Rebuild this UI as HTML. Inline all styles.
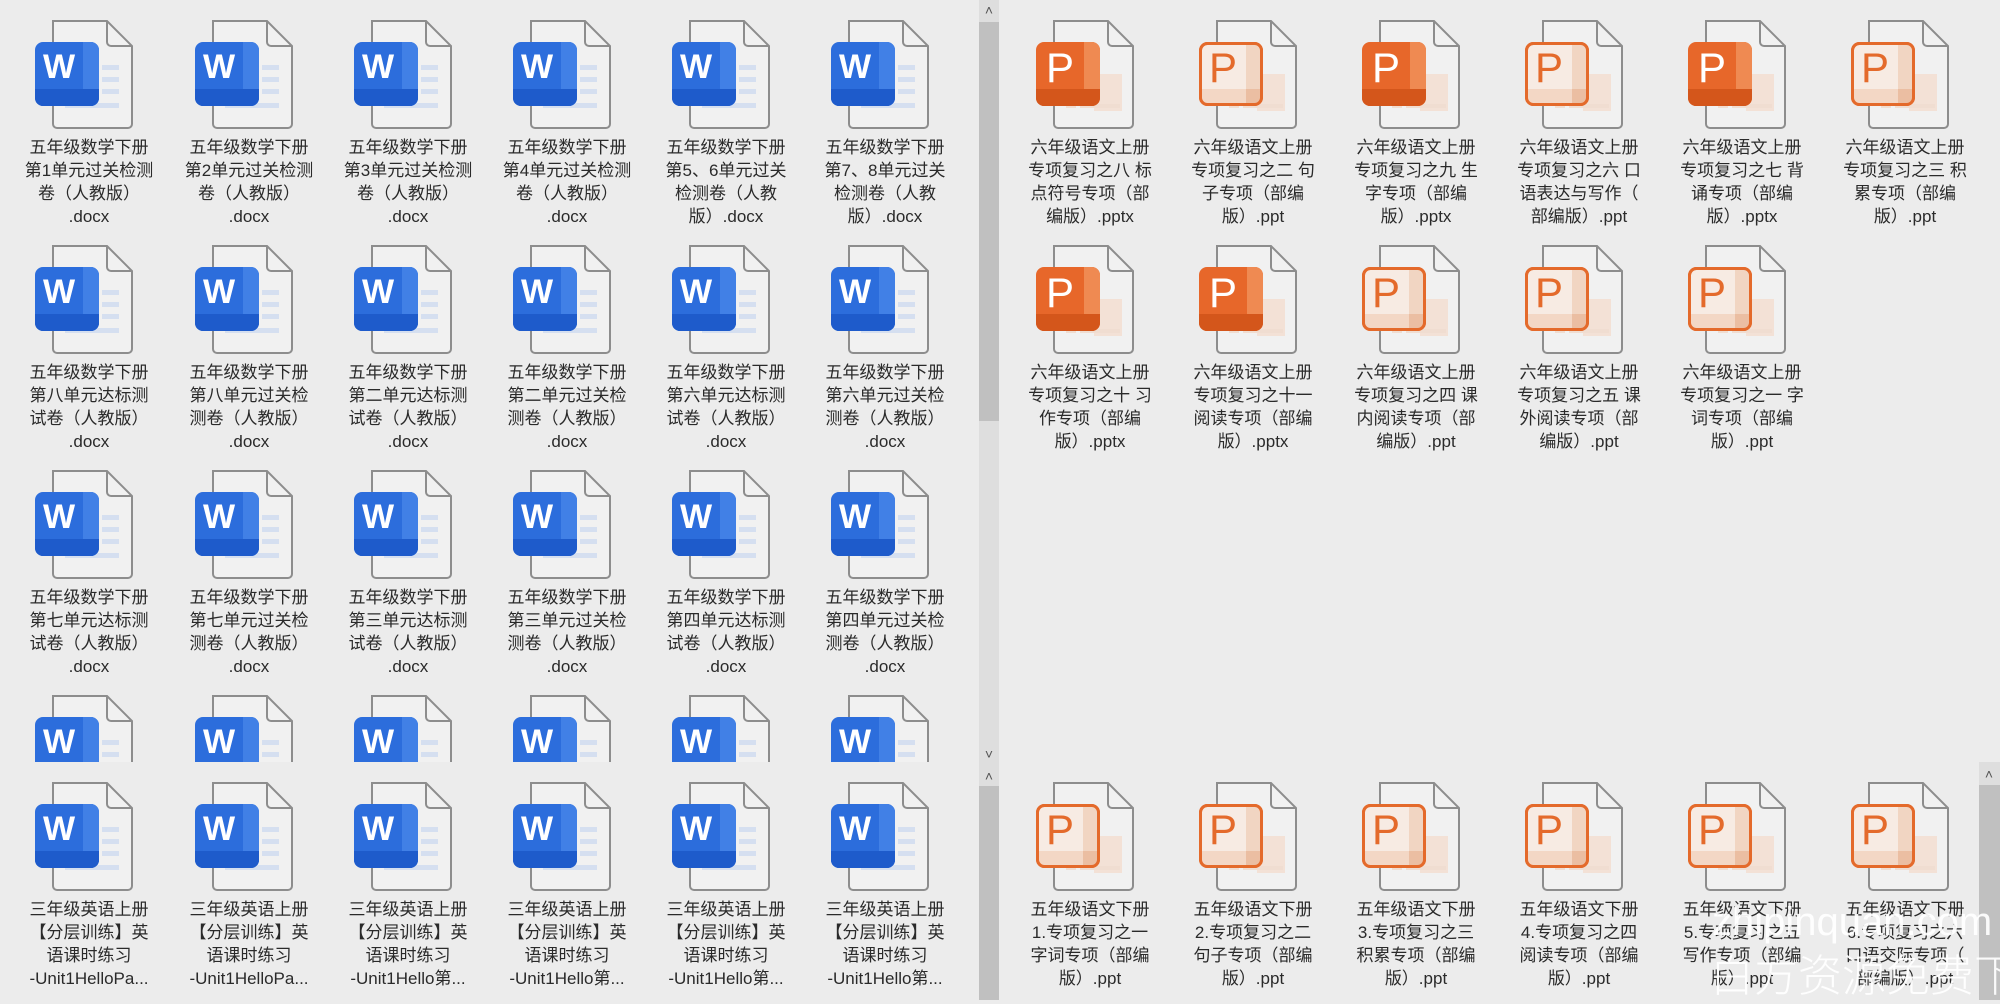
<!DOCTYPE html>
<html><head><meta charset="utf-8">
<style>
html,body{margin:0;padding:0}
body{width:2000px;height:1000px;background:#ececec;position:relative;overflow:hidden;font-family:"Liberation Sans","Noto Sans CJK SC",sans-serif}
.it{position:absolute;width:180px}
.it svg{position:absolute;left:36px;top:0;width:100px;height:112px}
.it .t{position:absolute;top:117px;left:0;width:180px;text-align:center;font-size:17px;line-height:23px;color:#2a2a2a;white-space:pre}
.sb{position:absolute;background:#dedede}
.th{position:absolute;background:#c0c0c0}
.ar{position:absolute;font-size:14px;color:#555;width:20px;text-align:center;line-height:20px}
.wm{position:absolute;color:rgba(255,255,255,0.92);white-space:nowrap}
</style></head><body>
<svg width="0" height="0" style="position:absolute">
<defs>
<g id="page"><path d="M18 2 H72 L97 27 V105 a4 4 0 0 1 -4 4 H22 a4 4 0 0 1 -4 -4 Z" fill="#f1f1f1" stroke="#8d8d8d" stroke-width="2"/><path d="M72 2 V23 a4 4 0 0 0 4 4 H97" fill="none" stroke="#8d8d8d" stroke-width="2"/></g>
<g id="word"><use href="#page"/>
<rect x="67" y="46" width="17" height="5" fill="#d5dff0"/><rect x="67" y="58" width="17" height="5" fill="#d5dff0"/><rect x="67" y="70" width="17" height="5" fill="#d5dff0"/><rect x="30" y="84" width="54" height="5" fill="#d5dff0"/>
<rect x="0" y="23" width="64" height="64" rx="8" fill="#2c6ddc"/>
<path d="M48 23 H56 a8 8 0 0 1 8 8 V79 a8 8 0 0 1 -8 8 H48 Z" fill="#4180e6"/>
<path d="M0 70 H64 V79 a8 8 0 0 1 -8 8 H8 a8 8 0 0 1 -8 -8 Z" fill="#1e5bcb"/>
<text x="24" y="59" text-anchor="middle" font-family="Liberation Sans,sans-serif" font-weight="bold" font-size="34" fill="#fff">W</text></g>
<g id="pf"><use href="#page"/>
<rect x="58" y="55" width="28" height="37" fill="#f3e1d6"/><rect x="30" y="85" width="10" height="4" fill="#f0ddd1"/><rect x="44" y="85" width="40" height="4" fill="#f0ddd1"/>
<rect x="0" y="23" width="64" height="64" rx="8" fill="#e7672a"/>
<path d="M48 23 H56 a8 8 0 0 1 8 8 V79 a8 8 0 0 1 -8 8 H48 Z" fill="#ef8a52"/>
<path d="M0 70 H64 V79 a8 8 0 0 1 -8 8 H8 a8 8 0 0 1 -8 -8 Z" fill="#d4561b"/>
<text x="24" y="63" text-anchor="middle" font-family="Liberation Sans,sans-serif" font-size="42" fill="#fff">P</text></g>
<g id="po"><use href="#page"/>
<rect x="58" y="55" width="28" height="37" fill="#f3e1d6"/><rect x="30" y="85" width="10" height="4" fill="#f0ddd1"/><rect x="44" y="85" width="40" height="4" fill="#f0ddd1"/>
<rect x="1.5" y="24.5" width="61" height="61" rx="7" fill="#f7ebe3" stroke="#e46a2b" stroke-width="3"/>
<rect x="47" y="26" width="14" height="58" fill="#f1d5c2"/>
<rect x="3" y="70" width="58" height="14" fill="#f3d7c5"/>
<rect x="47" y="70" width="14" height="14" fill="#ebbea2"/>
<rect x="1.5" y="24.5" width="61" height="61" rx="7" fill="none" stroke="#e46a2b" stroke-width="3"/>
<text x="24" y="63" text-anchor="middle" font-family="Liberation Sans,sans-serif" font-size="42" fill="#e46a2b">P</text></g>
</defs></svg>

<!-- LEFT TOP -->
<div class="it" style="left:-1px;top:19px"><svg viewBox="0 0 100 112"><use href="#word"/></svg><div class="t">五年级数学下册
第1单元过关检测
卷（人教版）
.docx</div></div>
<div class="it" style="left:159px;top:19px"><svg viewBox="0 0 100 112"><use href="#word"/></svg><div class="t">五年级数学下册
第2单元过关检测
卷（人教版）
.docx</div></div>
<div class="it" style="left:318px;top:19px"><svg viewBox="0 0 100 112"><use href="#word"/></svg><div class="t">五年级数学下册
第3单元过关检测
卷（人教版）
.docx</div></div>
<div class="it" style="left:477px;top:19px"><svg viewBox="0 0 100 112"><use href="#word"/></svg><div class="t">五年级数学下册
第4单元过关检测
卷（人教版）
.docx</div></div>
<div class="it" style="left:636px;top:19px"><svg viewBox="0 0 100 112"><use href="#word"/></svg><div class="t">五年级数学下册
第5、6单元过关
检测卷（人教
版）.docx</div></div>
<div class="it" style="left:795px;top:19px"><svg viewBox="0 0 100 112"><use href="#word"/></svg><div class="t">五年级数学下册
第7、8单元过关
检测卷（人教
版）.docx</div></div>

<div class="it" style="left:-1px;top:244px"><svg viewBox="0 0 100 112"><use href="#word"/></svg><div class="t">五年级数学下册
第八单元达标测
试卷（人教版）
.docx</div></div>
<div class="it" style="left:159px;top:244px"><svg viewBox="0 0 100 112"><use href="#word"/></svg><div class="t">五年级数学下册
第八单元过关检
测卷（人教版）
.docx</div></div>
<div class="it" style="left:318px;top:244px"><svg viewBox="0 0 100 112"><use href="#word"/></svg><div class="t">五年级数学下册
第二单元达标测
试卷（人教版）
.docx</div></div>
<div class="it" style="left:477px;top:244px"><svg viewBox="0 0 100 112"><use href="#word"/></svg><div class="t">五年级数学下册
第二单元过关检
测卷（人教版）
.docx</div></div>
<div class="it" style="left:636px;top:244px"><svg viewBox="0 0 100 112"><use href="#word"/></svg><div class="t">五年级数学下册
第六单元达标测
试卷（人教版）
.docx</div></div>
<div class="it" style="left:795px;top:244px"><svg viewBox="0 0 100 112"><use href="#word"/></svg><div class="t">五年级数学下册
第六单元过关检
测卷（人教版）
.docx</div></div>

<div class="it" style="left:-1px;top:469px"><svg viewBox="0 0 100 112"><use href="#word"/></svg><div class="t">五年级数学下册
第七单元达标测
试卷（人教版）
.docx</div></div>
<div class="it" style="left:159px;top:469px"><svg viewBox="0 0 100 112"><use href="#word"/></svg><div class="t">五年级数学下册
第七单元过关检
测卷（人教版）
.docx</div></div>
<div class="it" style="left:318px;top:469px"><svg viewBox="0 0 100 112"><use href="#word"/></svg><div class="t">五年级数学下册
第三单元达标测
试卷（人教版）
.docx</div></div>
<div class="it" style="left:477px;top:469px"><svg viewBox="0 0 100 112"><use href="#word"/></svg><div class="t">五年级数学下册
第三单元过关检
测卷（人教版）
.docx</div></div>
<div class="it" style="left:636px;top:469px"><svg viewBox="0 0 100 112"><use href="#word"/></svg><div class="t">五年级数学下册
第四单元达标测
试卷（人教版）
.docx</div></div>
<div class="it" style="left:795px;top:469px"><svg viewBox="0 0 100 112"><use href="#word"/></svg><div class="t">五年级数学下册
第四单元过关检
测卷（人教版）
.docx</div></div>

<div style="position:absolute;left:0;top:694px;width:979px;height:68px;overflow:hidden">
<div class="it" style="left:-1px;top:0"><svg viewBox="0 0 100 112"><use href="#word"/></svg></div>
<div class="it" style="left:159px;top:0"><svg viewBox="0 0 100 112"><use href="#word"/></svg></div>
<div class="it" style="left:318px;top:0"><svg viewBox="0 0 100 112"><use href="#word"/></svg></div>
<div class="it" style="left:477px;top:0"><svg viewBox="0 0 100 112"><use href="#word"/></svg></div>
<div class="it" style="left:636px;top:0"><svg viewBox="0 0 100 112"><use href="#word"/></svg></div>
<div class="it" style="left:795px;top:0"><svg viewBox="0 0 100 112"><use href="#word"/></svg></div>
</div>

<!-- LEFT BOTTOM -->
<div class="it" style="left:-1px;top:781px"><svg viewBox="0 0 100 112"><use href="#word"/></svg><div class="t">三年级英语上册
【分层训练】英
语课时练习
-Unit1HelloPa...</div></div>
<div class="it" style="left:159px;top:781px"><svg viewBox="0 0 100 112"><use href="#word"/></svg><div class="t">三年级英语上册
【分层训练】英
语课时练习
-Unit1HelloPa...</div></div>
<div class="it" style="left:318px;top:781px"><svg viewBox="0 0 100 112"><use href="#word"/></svg><div class="t">三年级英语上册
【分层训练】英
语课时练习
-Unit1Hello第...</div></div>
<div class="it" style="left:477px;top:781px"><svg viewBox="0 0 100 112"><use href="#word"/></svg><div class="t">三年级英语上册
【分层训练】英
语课时练习
-Unit1Hello第...</div></div>
<div class="it" style="left:636px;top:781px"><svg viewBox="0 0 100 112"><use href="#word"/></svg><div class="t">三年级英语上册
【分层训练】英
语课时练习
-Unit1Hello第...</div></div>
<div class="it" style="left:795px;top:781px"><svg viewBox="0 0 100 112"><use href="#word"/></svg><div class="t">三年级英语上册
【分层训练】英
语课时练习
-Unit1Hello第...</div></div>

<!-- middle scrollbar -->
<div class="sb" style="left:979px;top:0;width:20px;height:1000px"></div>
<div class="ar" style="left:979px;top:0">&#708;</div>
<div class="th" style="left:979px;top:22px;width:20px;height:399px"></div>
<div class="ar" style="left:979px;top:744px">&#709;</div>
<div class="ar" style="left:979px;top:766px">&#708;</div>
<div class="th" style="left:979px;top:786px;width:20px;height:214px"></div>

<!-- RIGHT TOP -->
<div class="it" style="left:1000px;top:19px"><svg viewBox="0 0 100 112"><use href="#pf"/></svg><div class="t">六年级语文上册
专项复习之八 标
点符号专项（部
编版）.pptx</div></div>
<div class="it" style="left:1163px;top:19px"><svg viewBox="0 0 100 112"><use href="#po"/></svg><div class="t">六年级语文上册
专项复习之二 句
子专项（部编
版）.ppt</div></div>
<div class="it" style="left:1326px;top:19px"><svg viewBox="0 0 100 112"><use href="#pf"/></svg><div class="t">六年级语文上册
专项复习之九 生
字专项（部编
版）.pptx</div></div>
<div class="it" style="left:1489px;top:19px"><svg viewBox="0 0 100 112"><use href="#po"/></svg><div class="t">六年级语文上册
专项复习之六 口
语表达与写作（
部编版）.ppt</div></div>
<div class="it" style="left:1652px;top:19px"><svg viewBox="0 0 100 112"><use href="#pf"/></svg><div class="t">六年级语文上册
专项复习之七 背
诵专项（部编
版）.pptx</div></div>
<div class="it" style="left:1815px;top:19px"><svg viewBox="0 0 100 112"><use href="#po"/></svg><div class="t">六年级语文上册
专项复习之三 积
累专项（部编
版）.ppt</div></div>

<div class="it" style="left:1000px;top:244px"><svg viewBox="0 0 100 112"><use href="#pf"/></svg><div class="t">六年级语文上册
专项复习之十 习
作专项（部编
版）.pptx</div></div>
<div class="it" style="left:1163px;top:244px"><svg viewBox="0 0 100 112"><use href="#pf"/></svg><div class="t">六年级语文上册
专项复习之十一
阅读专项（部编
版）.pptx</div></div>
<div class="it" style="left:1326px;top:244px"><svg viewBox="0 0 100 112"><use href="#po"/></svg><div class="t">六年级语文上册
专项复习之四 课
内阅读专项（部
编版）.ppt</div></div>
<div class="it" style="left:1489px;top:244px"><svg viewBox="0 0 100 112"><use href="#po"/></svg><div class="t">六年级语文上册
专项复习之五 课
外阅读专项（部
编版）.ppt</div></div>
<div class="it" style="left:1652px;top:244px"><svg viewBox="0 0 100 112"><use href="#po"/></svg><div class="t">六年级语文上册
专项复习之一 字
词专项（部编
版）.ppt</div></div>

<!-- RIGHT BOTTOM -->
<div class="it" style="left:1000px;top:781px"><svg viewBox="0 0 100 112"><use href="#po"/></svg><div class="t">五年级语文下册
1.专项复习之一
字词专项（部编
版）.ppt</div></div>
<div class="it" style="left:1163px;top:781px"><svg viewBox="0 0 100 112"><use href="#po"/></svg><div class="t">五年级语文下册
2.专项复习之二
句子专项（部编
版）.ppt</div></div>
<div class="it" style="left:1326px;top:781px"><svg viewBox="0 0 100 112"><use href="#po"/></svg><div class="t">五年级语文下册
3.专项复习之三
积累专项（部编
版）.ppt</div></div>
<div class="it" style="left:1489px;top:781px"><svg viewBox="0 0 100 112"><use href="#po"/></svg><div class="t">五年级语文下册
4.专项复习之四
阅读专项（部编
版）.ppt</div></div>
<div class="it" style="left:1652px;top:781px"><svg viewBox="0 0 100 112"><use href="#po"/></svg><div class="t">五年级语文下册
5.专项复习之五
写作专项（部编
版）.ppt</div></div>
<div class="it" style="left:1815px;top:781px"><svg viewBox="0 0 100 112"><use href="#po"/></svg><div class="t">五年级语文下册
6.专项复习之六
口语交际专项（
部编版）.ppt</div></div>

<!-- right bottom scrollbar -->
<div class="sb" style="left:1979px;top:762px;width:21px;height:238px"></div>
<div class="ar" style="left:1979px;top:764px">&#708;</div>
<div class="th" style="left:1979px;top:785px;width:21px;height:215px"></div>

<!-- watermark -->
<div class="wm" style="left:1712px;top:900px;font-size:40px;line-height:44px">zhipinquan.com</div>
<div class="wm" style="left:1710px;top:948px;font-size:44px;line-height:48px;font-family:'Noto Sans CJK SC',sans-serif;font-weight:300">白方资源免费下载</div>
</body></html>
